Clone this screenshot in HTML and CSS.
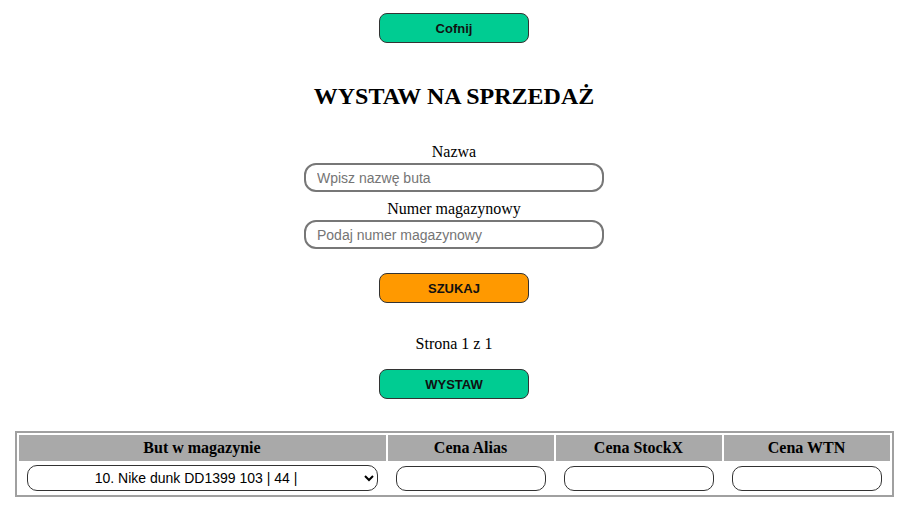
FILE: index.html
```html
<!DOCTYPE html>
<html lang="pl">
<head>
<meta charset="utf-8">
<title>Wystaw na sprzedaż</title>
<link rel="stylesheet" href="styles.css">
</head>
<body>
<div class="page">
  <button class="btn btn-green btn-back">Cofnij</button>
  <h2 class="title">WYSTAW NA SPRZEDAŻ</h2>
  <label class="label label-first" for="nazwa">Nazwa</label>
  <input class="field" id="nazwa" type="text" placeholder="Wpisz nazwę buta">
  <label class="label label-second" for="numer">Numer magazynowy</label>
  <input class="field" id="numer" type="text" placeholder="Podaj numer magazynowy">
  <button class="btn btn-orange btn-search">SZUKAJ</button>
  <p class="pager">Strona 1 z 1</p>
  <button class="btn btn-green btn-list">WYSTAW</button>
  <table class="grid">
    <colgroup>
      <col class="col-main">
      <col class="col-price">
      <col class="col-price">
      <col class="col-price">
    </colgroup>
    <thead>
      <tr>
        <th>But w magazynie</th>
        <th>Cena Alias</th>
        <th>Cena StockX</th>
        <th>Cena WTN</th>
      </tr>
    </thead>
    <tbody>
      <tr>
        <td><select class="pick"><option>10. Nike dunk DD1399 103 | 44 |</option></select></td>
        <td><input class="price" type="text"></td>
        <td><input class="price" type="text"></td>
        <td><input class="price" type="text"></td>
      </tr>
    </tbody>
  </table>
</div>
</body>
</html>
```
FILE: styles.css
```css
html, body {
  margin: 0;
  padding: 0;
  background: #fff;
}

.page {
  display: flex;
  flex-direction: column;
  align-items: center;
  padding-top: 13px;
  padding-right: 1px;
  font-family: "Liberation Serif", "Times New Roman", serif;
  color: #000;
}

.btn {
  box-sizing: border-box;
  width: 150px;
  height: 30px;
  border: 1px solid #333;
  border-radius: 8px;
  font-family: "Liberation Sans", Arial, sans-serif;
  font-weight: bold;
  font-size: 13px;
  color: #111;
  padding: 0;
  margin: 0;
  cursor: pointer;
}

.btn-green {
  background: #00cc92;
}

.btn-orange {
  background: #ff9900;
}

.title {
  margin: 39px 0 0;
  font-size: 24px;
  line-height: 28px;
  font-weight: bold;
}

.label {
  display: block;
  font-size: 16px;
  line-height: 18px;
}

.label-first {
  margin-top: 33px;
}

.label-second {
  margin-top: 8px;
}

.field {
  box-sizing: border-box;
  width: 300px;
  height: 29px;
  margin-top: 2px;
  border: 2px solid #777;
  border-radius: 12px;
  padding: 0 11px;
  font-family: "Liberation Sans", Arial, sans-serif;
  font-size: 14px;
  outline: none;
}

.field::placeholder {
  color: #757575;
}

.btn-search {
  margin-top: 24px;
}

.pager {
  margin: 32px 0 0;
  font-size: 16px;
  line-height: 18px;
}

.btn-list {
  margin-top: 16px;
}

.grid {
  margin-top: 32px;
  width: 878px;
  table-layout: fixed;
  border: 2px solid #a0a0a0;
  border-spacing: 2px;
}

.col-main {
  width: 367px;
}

.col-price {
  width: 166px;
}

.grid th {
  background: #a9a9a9;
  height: 26px;
  padding: 0;
  font-size: 16px;
  font-weight: bold;
  text-align: center;
  vertical-align: middle;
}

.grid td {
  height: 30px;
  padding: 0 8px;
  vertical-align: middle;
  text-align: center;
}

.pick {
  box-sizing: border-box;
  width: 100%;
  height: 26px;
  border: 1px solid #333;
  border-radius: 10px;
  background: #fff;
  font-family: "Liberation Sans", Arial, sans-serif;
  font-size: 14px;
  color: #000;
  text-align: center;
  text-align-last: center;
  display: block;
}

.price {
  box-sizing: border-box;
  width: 100%;
  height: 25px;
  border: 1px solid #333;
  border-radius: 10px;
  background: #fff;
  display: block;
}
```
